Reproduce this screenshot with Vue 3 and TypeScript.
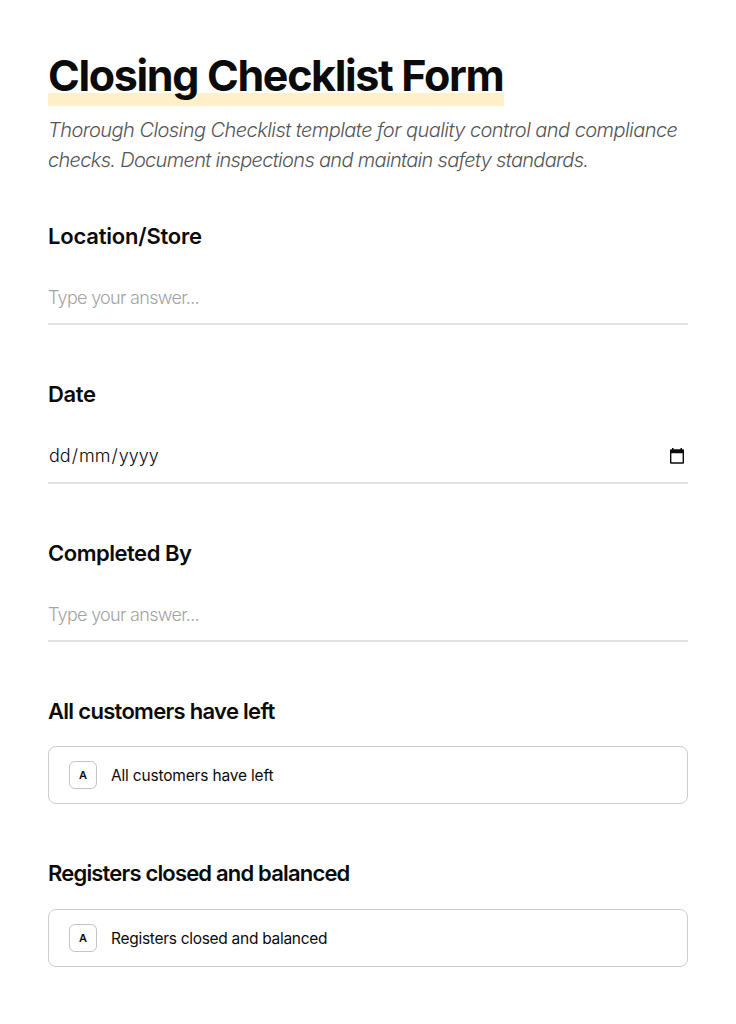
<script setup lang="ts">
interface Question {
  id: string
  label: string
  kind: 'text' | 'date' | 'choice'
}

const questions: Question[] = [
  { id: 'location', label: 'Location/Store', kind: 'text' },
  { id: 'day', label: 'Date', kind: 'date' },
  { id: 'completed', label: 'Completed By', kind: 'text' },
  { id: 'customers', label: 'All customers have left', kind: 'choice' },
  { id: 'registers', label: 'Registers closed and balanced', kind: 'choice' },
]
</script>

<template>
  <main class="form">
    <h1 class="title">Closing Checklist Form</h1>
    <p class="intro">
      <span class="line first">Thorough Closing Checklist template for quality control and compliance</span>
      <span class="line second">checks. Document inspections and maintain safety standards.</span>
    </p>
    <section v-for="q in questions" :key="q.id" class="question" :class="[q.kind, q.id]">
      <h2 class="label">{{ q.label }}</h2>
      <div v-if="q.kind === 'choice'" class="option">
        <span class="key">A</span>
        <span class="choice-text">{{ q.label }}</span>
      </div>
      <div v-else-if="q.kind === 'date'" class="field">
        <span class="date-text">dd<i class="slash">/</i>mm<i class="slash">/</i>yyyy</span>
        <svg class="calendar" width="16" height="18" viewBox="0 0 16 18" aria-hidden="true">
          <path fill="#0b0b0b" d="M3 1h1.5v1.3h7V1H13v1.3h1q1 0 1 1v12.4q0 1-1 1H2q-1 0-1-1V3.3q0-1 1-1h1zM2.4 6.3v9h11.2v-9z" />
        </svg>
      </div>
      <div v-else class="field"><span class="placeholder">Type your answer...</span></div>
    </section>
  </main>
</template>

<style>
body {
  margin: 0;
  background: #fff;
}
</style>

<style scoped>
.form {
  box-sizing: border-box;
  width: 736px;
  height: 1024px;
  overflow: hidden;
  padding: 48px 48px 0;
  background: #fff;
  color: #0b0b0b;
  font-family: Inter, "Liberation Sans", sans-serif;
}
.title {
  width: 456px;
  height: 58px;
  margin: 0;
  background: linear-gradient(#fff0c9, #fff0c9) left bottom / 100% 13px no-repeat;
  font-size: 43px;
  font-weight: 700;
  line-height: 55px;
  letter-spacing: -1.34px;
  white-space: nowrap;
}
.intro {
  margin: 9px 0 46px;
  color: #555;
  font-size: 20px;
  font-style: italic;
  font-weight: 300;
  line-height: 30px;
  white-space: nowrap;
}
.line {
  display: block;
  width: max-content;
}
.first {
  letter-spacing: -0.55px;
}
.second {
  letter-spacing: -0.68px;
}
.question {
  margin-bottom: 54.5px;
}
.question.location {
  margin-bottom: 54px;
}
.question.completed {
  margin-bottom: 53.5px;
}
.question.customers {
  margin-bottom: 54px;
}
.label {
  margin: 0;
  height: 30px;
  font-size: 22px;
  font-weight: 600;
  line-height: 30px;
  letter-spacing: -0.7px;
  white-space: nowrap;
}
.location .label {
  letter-spacing: -0.2px;
}
.day .label {
  letter-spacing: -0.35px;
}
.completed .label {
  letter-spacing: -0.48px;
}
.registers .label {
  letter-spacing: -0.82px;
}
.field {
  box-sizing: border-box;
  display: flex;
  align-items: center;
  justify-content: space-between;
  height: 53px;
  margin-top: 21px;
  padding-right: 3px;
  border-bottom: 2px solid #e1e1e1;
  font-size: 18px;
  font-weight: 300;
}
.day .field {
  margin-top: 21.5px;
}
.placeholder {
  color: #a3a3a3;
  letter-spacing: -0.7px;
}
.date-text {
  padding-left: 1px;
  line-height: 22px;
  margin-bottom: 1px;
}
.slash {
  padding: 0 1px;
  font-style: normal;
}
.calendar {
  display: block;
}
.option {
  box-sizing: border-box;
  display: flex;
  align-items: center;
  height: 58px;
  margin-top: 20px;
  padding-left: 20px;
  border: 1px solid #ccc;
  border-radius: 8px;
}
.registers .option {
  margin-top: 21px;
}
.key {
  box-sizing: border-box;
  display: flex;
  align-items: center;
  justify-content: center;
  width: 28px;
  height: 28px;
  margin-right: 14px;
  border: 1px solid #c4c4c4;
  border-radius: 6px;
  font-size: 11px;
  font-weight: 600;
}
.choice-text {
  padding-top: 1px;
  font-size: 15.5px;
  font-weight: 400;
  letter-spacing: -0.18px;
}
.registers .choice-text {
  letter-spacing: -0.29px;
}
</style>
